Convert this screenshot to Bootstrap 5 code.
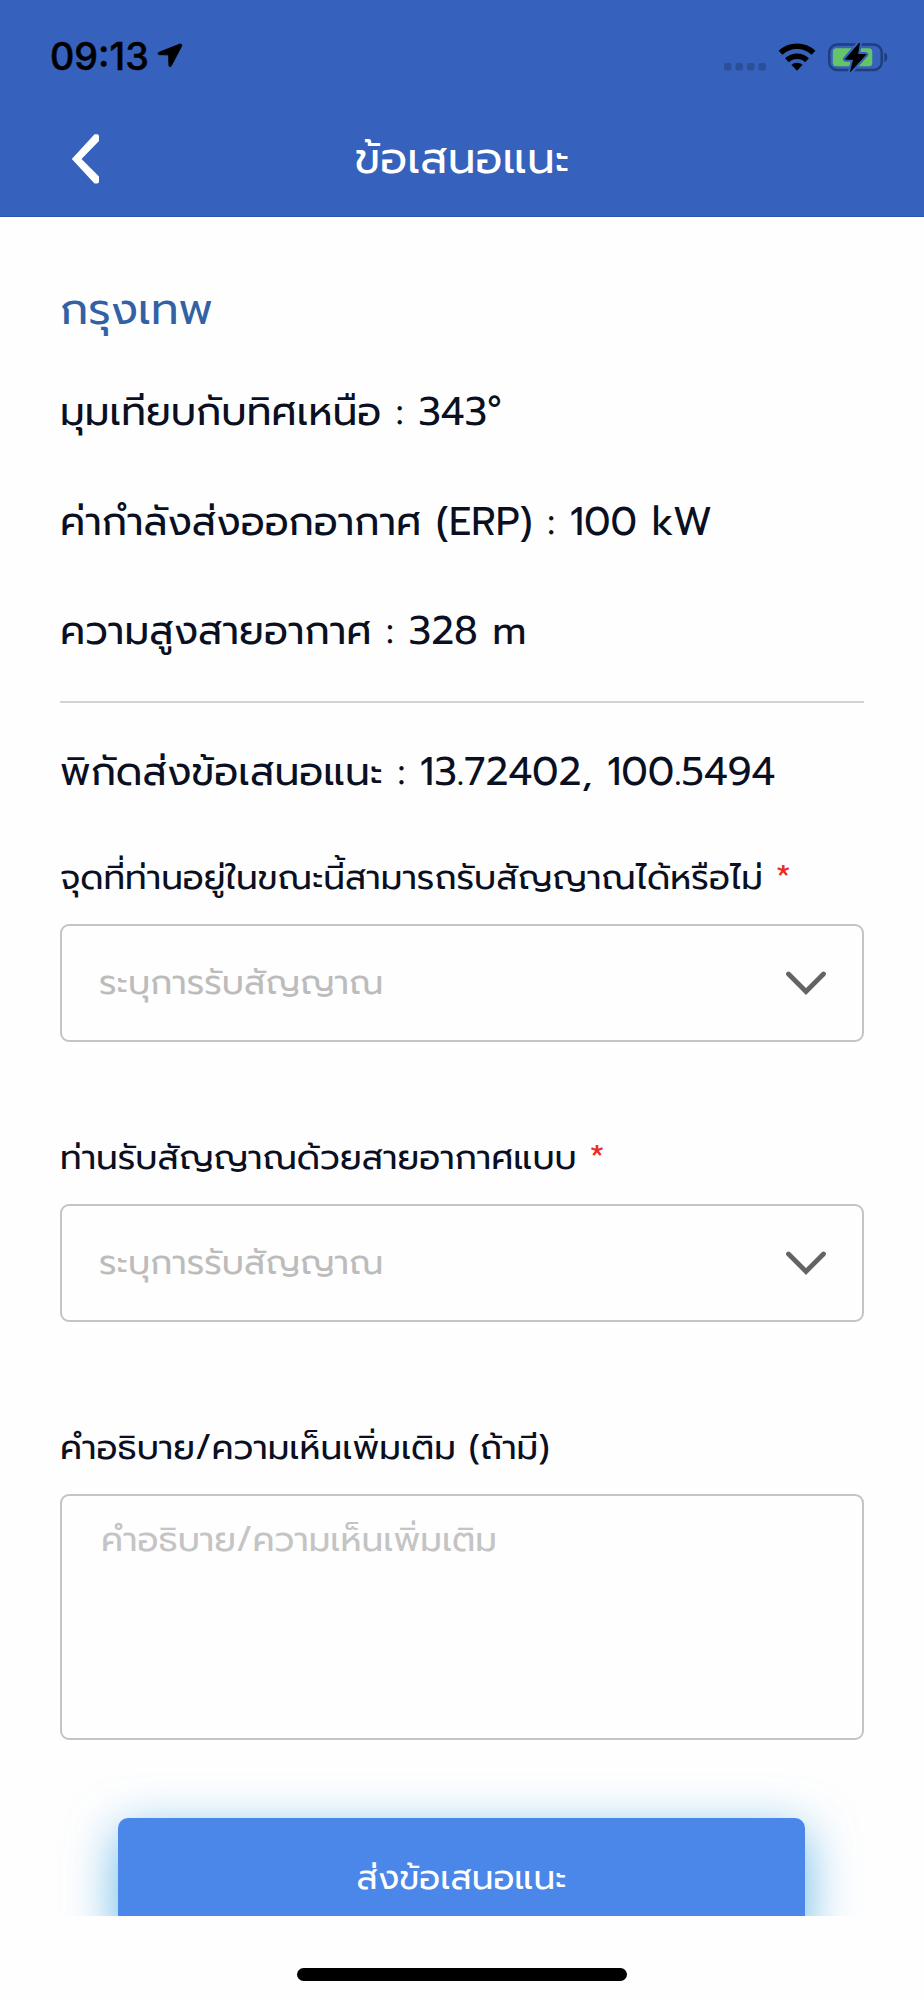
<!DOCTYPE html>
<html lang="th">
<head>
<meta charset="utf-8">
<meta name="viewport" content="width=device-width, initial-scale=1">
<title>ข้อเสนอแนะ</title>
<link href="https://cdn.jsdelivr.net/npm/bootstrap@5.3.0/dist/css/bootstrap.min.css" rel="stylesheet">
<style>
  body { font-family: Prompt, "Noto Sans Thai", "Liberation Sans", sans-serif; background: #fefefe; color: #0a1022; height: 2000px; overflow: hidden; }
  .app-header { background: #3661bc; height: 217px; border-bottom: 1px solid #2b54ad; }
  .status-bar { height: 113px; padding: 0 35px 0 50px; color: #000; }
  .clock { font: 500 37.7px/1 Inter, sans-serif; -webkit-text-stroke: .5px #000; }
  .title-bar { height: 92px; padding: 0 71px; }
  .title-bar .page-title { font-size: 44.2px; line-height: 92px; font-weight: 400; }
  .title-side { width: 30px; }
  .scroll-area { height: 1699px; padding: 61px 60px 0; overflow: hidden; }
  .station { font-size: 44px; line-height: 64px; color: #3262a4; margin: 0 0 16px; font-weight: 400; }
  .info-line { font-size: 39.4px; line-height: 109.5px; white-space: nowrap; }
  .divider { height: 2px; background: #d3d3d3; margin: 14px 0 37px; }
  .coords { font-size: 39.4px; line-height: 64px; margin-bottom: 48px; white-space: nowrap; }
  .field-label { font-size: 34.45px; line-height: 52px; margin: 0 0 20px; display: block; white-space: nowrap; }
  .req { color: #f02a20; }
  .field-box { border: 2px solid #c4c4c4; border-radius: 9px; font-size: 34.45px; color: #bcbcbc; background: transparent; width: 100%; }
  .pick { height: 118px; padding: 0 35px 0 37px; margin-bottom: 90px; }
  .pick svg { margin-top: 2px; }
  .pick-last { margin-bottom: 100px; }
  .note { display: block; height: 246px; padding: 18px 39px; line-height: 52px; resize: none; margin-bottom: 78px; }
  .note::placeholder { color: #c4c4c4; opacity: 1; }
  .send { display: block; width: 687px; height: 122px; margin-left: 58px; border: 0; border-radius: 10px; background: #4b87e9; color: #fff; font-size: 34.4px; box-shadow: 0 14px 50px rgba(20,145,220,.66); }
  .home-bar { width: 330px; height: 12.5px; margin-top: 52px; background: #000; }
</style>
</head>
<body>
<header class="app-header">
  <div class="status-bar d-flex align-items-center justify-content-between">
    <div class="d-flex align-items-center gap-2">
      <span class="clock">09:13</span>
      <svg width="26" height="26" viewBox="0 0 27 27"><path d="M23.5 1.2 2.3 9.6C.5 10.4.8 12 2.5 12.1l9.6.2.3 10.6c.1 2 1.800 2.300 2.600.5L25.500 3.300c.7-1.600-.5-2.700-2-2.100z" stroke="#000" stroke-width="1" stroke-linejoin="round"/></svg>
    </div>
    <div class="d-flex align-items-center">
      <svg width="166" height="32" viewBox="0 0 166 32">
        <g fill="#2c4f9a"><rect x="1" y="22" width="7.500" height="7.500" rx="2"/><rect x="12.500" y="22" width="7.500" height="7.500" rx="2"/><rect x="24" y="22" width="7.500" height="7.500" rx="2"/><rect x="35.500" y="22" width="7.500" height="7.500" rx="2"/></g>
        <g fill="none" stroke="#000" stroke-width="5.600"><path d="M57.500 11.800a24 24 0 0 1 33 0"/><path d="M64 19.200a14.500 14.500 0 0 1 20 0"/></g>
        <path d="M68.400 23.800a8.500 8.500 0 0 1 11.200 0L74 29.800z"/>
        <rect x="106.200" y="3.500" width="52.500" height="25.500" rx="8" fill="none" stroke="#203d7c" stroke-width="2.400"/>
        <path d="M161.300 11.500q3 1.200 3 4.700t-3 4.700z" fill="#203d7c"/>
        <rect x="109.800" y="7.200" width="39.500" height="18" rx="3.500" fill="#65c466"/>
        <path d="M136.500 2 122.500 18.200h8.200L127.500 30.500 142.800 13.500H134.500z" stroke="#3661bc" stroke-width="5" stroke-linejoin="round"/>
        <path d="M136.500 2 122.500 18.200h8.200L127.500 30.500 142.800 13.500H134.500z" stroke="#000" stroke-width="1" stroke-linejoin="round"/>
      </svg>
    </div>
  </div>
  <nav class="title-bar d-flex align-items-center justify-content-between text-white">
    <svg class="title-side" width="30" height="50" viewBox="0 0 30 50"><path d="M23.500 .300H26q2 0 2 2V7L10.500 25 28 42.500v5q0 2-2 2H23.500L.800 25z" fill="#fff"/></svg>
    <h1 class="page-title m-0">ข้อเสนอแนะ</h1>
    <span class="title-side"></span>
  </nav>
</header>
<main class="scroll-area">
  <h2 class="station">กรุงเทพ</h2>
  <div class="info-line">มุมเทียบกับทิศเหนือ : 343°</div>
  <div class="info-line">ค่ากำลังส่งออกอากาศ (ERP) : 100 kW</div>
  <div class="info-line">ความสูงสายอากาศ : 328 m</div>
  <div class="divider"></div>
  <div class="coords">พิกัดส่งข้อเสนอแนะ : 13.72402, 100.5494</div>

  <label class="field-label">จุดที่ท่านอยู่ในขณะนี้สามารถรับสัญญาณได้หรือไม่ <span class="req">*</span></label>
  <div class="field-box pick d-flex align-items-center justify-content-between">
    <span>ระบุการรับสัญญาณ</span>
    <svg width="42" height="26" viewBox="0 0 42 26"><path d="M3.500 3 21 20.500 38.500 3" fill="none" stroke="#636363" stroke-width="4.800" stroke-linecap="round"/></svg>
  </div>

  <label class="field-label">ท่านรับสัญญาณด้วยสายอากาศแบบ <span class="req">*</span></label>
  <div class="field-box pick pick-last d-flex align-items-center justify-content-between">
    <span>ระบุการรับสัญญาณ</span>
    <svg width="42" height="26" viewBox="0 0 42 26"><path d="M3.500 3 21 20.500 38.500 3" fill="none" stroke="#636363" stroke-width="4.800" stroke-linecap="round"/></svg>
  </div>

  <label class="field-label" for="note">คำอธิบาย/ความเห็นเพิ่มเติม (ถ้ามี)</label>
  <textarea id="note" class="field-box note" placeholder="คำอธิบาย/ความเห็นเพิ่มเติม"></textarea>
  <button type="button" class="send">ส่งข้อเสนอแนะ</button>
</main>
<div class="home-bar rounded-pill mx-auto"></div>
<script src="https://cdn.jsdelivr.net/npm/bootstrap@5.3.0/dist/js/bootstrap.bundle.min.js"></script>
</body>
</html>
